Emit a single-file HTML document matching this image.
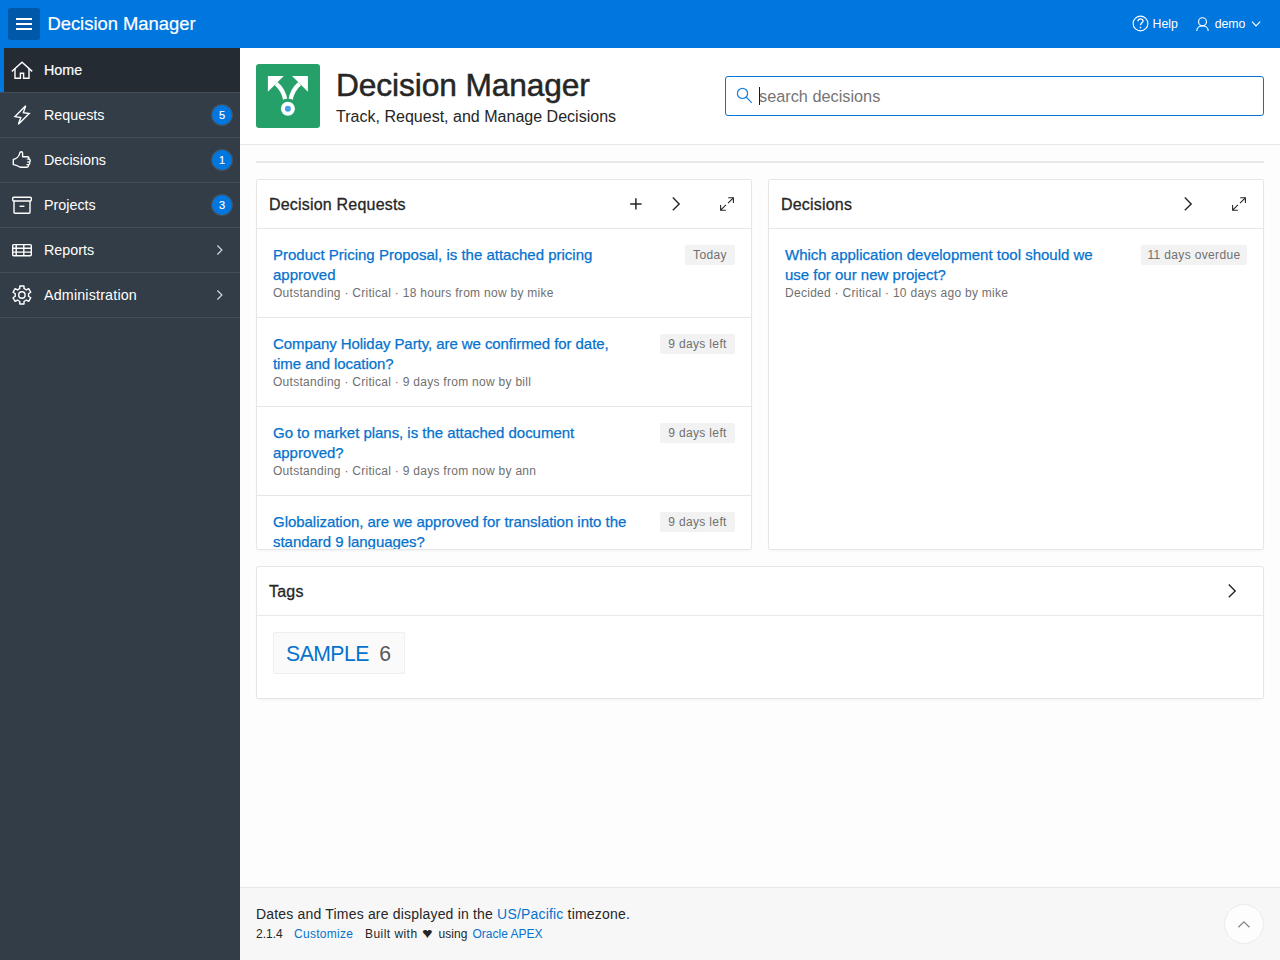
<!DOCTYPE html>
<html lang="en">
<head>
<meta charset="utf-8">
<title>Decision Manager</title>
<style>
*{box-sizing:border-box;margin:0;padding:0}
html,body{width:1280px;height:960px;overflow:hidden}
body{font-family:"Liberation Sans",sans-serif;background:#fdfdfd;color:#262626;position:relative;-webkit-font-smoothing:antialiased}
a{text-decoration:none;color:#0572ce}
.abs{position:absolute}
.t{position:absolute;white-space:nowrap;transform-origin:0 50%}
svg{display:block;overflow:visible}

/* header */
#hdr{position:absolute;left:0;top:0;width:1280px;height:48px;background:#0076df;color:#fff}
#burger{position:absolute;left:8px;top:8px;width:32px;height:32px;border-radius:3px;background:#0059a8}
#burger i{position:absolute;left:8px;width:16px;height:2px;background:#fff}

/* sidebar */
#side{position:absolute;left:0;top:48px;width:240px;height:912px;background:#333d47;color:#fff}
.nav{position:absolute;left:0;width:240px;height:45px;border-top:1px solid #444e58}
.nav .lbl{position:absolute;left:44px;top:0;height:44px;line-height:44px;font-size:14.3px;white-space:nowrap;transform-origin:0 50%}
.nav svg{position:absolute}
.nav .bdg{position:absolute;left:212px;top:12px;width:20px;height:20px;border-radius:50%;background:#0076df;box-shadow:0 0 0 1px rgba(255,255,255,.1);text-align:center;line-height:20px;font-size:11px;-webkit-text-stroke:.15px #fff;color:#fff}
.nav.cur{background:#242b33;border-top:0;height:44px}
.nav.cur:before{content:"";position:absolute;left:0;top:0;width:4px;height:44px;background:#0076df}

/* hero */
#hero{position:absolute;left:240px;top:48px;width:1040px;height:97px;background:#fff;border-bottom:1px solid #e8e8e8}
#logo{position:absolute;left:16px;top:16px;width:64px;height:64px;border-radius:3px;background:#26a069}
#search{position:absolute;left:485px;top:28px;width:539px;height:40px;border:1px solid #0572ce;border-radius:3px;background:#fff}

#rule{position:absolute;left:256px;top:161px;width:1008px;height:2px;background:#e7e7e7}

/* cards */
.card{position:absolute;background:#fff;border:1px solid #e6e6e6;border-radius:2px;box-shadow:0 2px 4px -2px rgba(0,0,0,.075);overflow:hidden}
.card .hd{position:absolute;left:0;top:0;right:0;height:49px;border-bottom:1px solid #e9e9e9}
.card .hd .ttl{position:absolute;left:12px;top:1px;line-height:48px;font-size:16px;letter-spacing:.2px;-webkit-text-stroke:.3px #262626;color:#262626;white-space:nowrap;transform-origin:0 50%}
.row{position:absolute;left:0;right:0;height:89px;border-top:1px solid #e6e6e6}
.row .a{position:absolute;left:16px;top:16px;font-size:15px;line-height:20px;color:#0572ce;-webkit-text-stroke:.25px #0572ce;white-space:nowrap;transform-origin:0 0}
.row .s{position:absolute;left:16px;top:56px;font-size:12px;letter-spacing:.28px;line-height:16px;color:#707070;white-space:nowrap;transform-origin:0 50%}
.row .b{position:absolute;right:16px;top:16px;height:20px;line-height:20px;text-align:center;border-radius:2px;background:#f2f2f2;color:#707070;font-size:12px;letter-spacing:.35px;white-space:nowrap}

/* footer */
#foot{position:absolute;left:240px;top:887px;width:1040px;height:73px;background:#f7f7f7;border-top:1px solid #e8e8e8}
#top{position:absolute;left:984px;top:16px;width:40px;height:40px;border-radius:50%;background:#fdfdfd;border:1px solid #ebebeb}
</style>
</head>
<body>

<!-- HEADER -->
<div id="hdr">
  <div id="burger"><i style="top:10px"></i><i style="top:15px"></i><i style="top:20px"></i></div>
  <div class="t" id="apptitle" style="left:47.400px;top:0;line-height:47px;font-size:18.400px;-webkit-text-stroke:.2px #fff">Decision Manager</div>
  <svg class="abs" style="left:1131.600px;top:15.300px" width="17" height="17" viewBox="0 0 17 17" fill="none" stroke="#fff"><circle cx="8.500" cy="8.500" r="7.400" stroke-width="1.100"/><path d="M6 6.200C6 4.700 7.100 3.900 8.500 3.900 10 3.900 11 4.800 11 6 11 7.900 8.500 7.900 8.500 10.300" stroke-width="1.300"/><circle cx="8.500" cy="12.500" r=".85" fill="#fff" stroke="none"/></svg>
  <div class="t" id="help" style="left:1152.500px;top:1px;line-height:47px;font-size:12.300px">Help</div>
  <svg class="abs" style="left:1195px;top:16px" width="16" height="16" viewBox="0 0 16 16" fill="none" stroke="#fff" stroke-width="1.150"><circle cx="7.500" cy="5.700" r="3.950"/><path d="M1.800 14.900C1.800 11.600 4.600 9.900 7.500 9.900S13.200 11.600 13.200 14.900"/></svg>
  <div class="t" id="demo" style="left:1214.700px;top:1px;line-height:47px;font-size:12.300px">demo</div>
  <svg class="abs" style="left:1251px;top:21px" width="10" height="6" viewBox="0 0 10 6"><path d="M1 .6 5 4.900 9.200.6" fill="none" stroke="#fff" stroke-width="1.150"/></svg>
</div>

<!-- SIDEBAR -->
<div id="side">
  <div class="nav cur" style="top:0"><svg width="44" height="44" style="left:0;top:0" fill="none" stroke="#fff" stroke-width="1.400"><path d="M12.300 22.900 22 14.200 31.700 22.900" stroke-linecap="square"/><path d="M15 20.600V30.200H20.400V25.300H23.600V30.200H29V20.600"/></svg><div class="lbl" style="-webkit-text-stroke:.2px #fff">Home</div></div>
  <div class="nav" style="top:44px"><svg width="44" height="44" style="left:0;top:0" fill="none" stroke="#fff" stroke-width="1.400"><path d="M25.700 12.700 15 23.600 20.800 24.500 18.400 31.300 29.200 20.500 23.400 19.600Z" stroke-linejoin="miter"/></svg><div class="lbl">Requests</div><div class="bdg">5</div></div>
  <div class="nav" style="top:89px"><svg width="44" height="44" style="left:0;top:0" fill="none" stroke="#fff" stroke-width="1.400" stroke-linejoin="round"><path d="M13.300 21.400C16.500 20.800 19.400 18 19.800 14.800 20 13.400 22.600 13.200 22.600 15V18.800H27.600C29 18.800 29.400 20.600 28.600 21 30.600 21.200 30.800 23.600 29.200 24 30.200 24.600 29.800 26.600 28.200 26.600 29 27.600 28.400 29.200 26.800 29.200H20.500C18.500 29.200 17.500 26.800 13.300 26.600Z"/><path d="M28.600 21H26.800M29.200 24H27M28.200 26.600H26.400" stroke-width="1.100"/></svg><div class="lbl">Decisions</div><div class="bdg">1</div></div>
  <div class="nav" style="top:134px"><svg width="44" height="44" style="left:0;top:0" fill="none" stroke="#fff" stroke-width="1.400"><rect x="12.700" y="14.300" width="18.600" height="3.700" rx="1"/><path d="M14 18V29.200a1 1 0 0 0 1 1H29a1 1 0 0 0 1-1V18"/><path d="M19.600 23.300H24.400"/></svg><div class="lbl">Projects</div><div class="bdg">3</div></div>
  <div class="nav" style="top:179px"><svg width="44" height="44" style="left:0;top:0" fill="none" stroke="#fff" stroke-width="1.400"><rect x="12.700" y="16.600" width="18.600" height="11.200" rx="1"/><path d="M16.200 16.600V27.800M23.800 16.600V27.800M12.700 20.300H31.300M12.700 24.100H31.300"/></svg><div class="lbl">Reports</div><svg width="8" height="12" style="left:216px;top:16px" viewBox="0 0 8 12" fill="none" stroke="#d4d7da" stroke-width="1.200"><path d="M1.400 1.500 5.900 6 1.400 10.500"/></svg></div>
  <div class="nav" style="top:224px"><svg width="44" height="44" style="left:0;top:0" fill="none" stroke="#fff" stroke-width="1.400" stroke-linejoin="round"><path d="M24.08 15.67L23.99 12.94L19.81 12.94L19.72 15.67A6.70 6.70 0 0 0 17.50 16.94L15.10 15.66L13.01 19.28L15.32 20.72A6.70 6.70 0 0 0 15.32 23.28L13.01 24.72L15.10 28.34L17.50 27.06A6.70 6.70 0 0 0 19.72 28.33L19.81 31.06L23.99 31.06L24.08 28.33A6.70 6.70 0 0 0 26.30 27.06L28.70 28.34L30.79 24.72L28.48 23.28A6.70 6.70 0 0 0 28.48 20.72L30.79 19.28L28.70 15.66L26.30 16.94A6.70 6.70 0 0 0 24.08 15.67Z"/><circle cx="21.900" cy="22" r="3.200"/></svg><div class="lbl" style="letter-spacing:.17px">Administration</div><svg width="8" height="12" style="left:216px;top:16px" viewBox="0 0 8 12" fill="none" stroke="#d4d7da" stroke-width="1.200"><path d="M1.400 1.500 5.900 6 1.400 10.500"/></svg></div>
  <div class="nav" style="top:269px;height:1px"></div>
</div>

<!-- HERO -->
<div id="hero">
  <div id="logo"><svg width="64" height="64" viewBox="0 0 64 64"><path d="M20.200 19.600Q27.600 26 29.300 36M43.600 19.600Q36.200 26 34.500 36" fill="none" stroke="#fff" stroke-width="4.300"/><circle cx="31.900" cy="44.800" r="10.200" fill="#26a069"/><path d="M11.900 11.900H27.800L11.900 27.800ZM51.900 11.900H36L51.900 27.800Z" fill="#fff"/><circle cx="31.900" cy="44.800" r="7" fill="#fff"/><circle cx="31.900" cy="44.800" r="3" fill="#479fea"/></svg></div>
  <div class="t" id="h1" style="left:96px;top:16px;line-height:42px;font-size:31.7px;letter-spacing:-.1px;-webkit-text-stroke:.5px #262626;color:#262626">Decision Manager</div>
  <div class="t" id="h2" style="left:96px;top:56.400px;line-height:24px;font-size:16.050px;color:#262626">Track, Request, and Manage Decisions</div>
  <div id="search">
    <svg class="abs" style="left:10px;top:10px" width="18" height="18" viewBox="0 0 18 18" fill="none" stroke="#1b7fe0" stroke-width="1.200"><circle cx="6.500" cy="6.400" r="5.100"/><path d="M10.200 10 15.800 15.800"/></svg>
    <div class="t" id="ph" style="left:33px;top:-.2px;line-height:38px;font-size:16.300px;color:#757575">search decisions</div>
    <div class="abs" style="left:33px;top:10px;width:1px;height:18px;background:#1a1a1a"></div>
  </div>
</div>
<div id="rule"></div>

<!-- DECISION REQUESTS -->
<div class="card" style="left:256px;top:179px;width:496px;height:371px">
  <div class="hd"><div class="ttl">Decision Requests</div><svg class="abs" style="left:360px;top:0" width="136" height="48" fill="none" stroke="#262626" stroke-width="1.400"><path d="M13.200 23.900H24.600M18.900 18.200V29.600" stroke-width="1.500"/><path d="M55.800 17.500 62.200 23.900 55.800 30.300"/><path d="M111.200 17.800H116.400V23M116.400 17.800 111 23.200M103.600 25V30.200H108.800M103.600 30.200 109 24.800" stroke-width="1.100"/></svg></div>
  <div class="row" style="top:48px"><div class="a">Product Pricing Proposal, is the attached pricing<br>approved</div><div class="s">Outstanding · Critical · 18 hours from now by mike</div><div class="b" style="width:50px">Today</div></div>
  <div class="row" style="top:137px"><div class="a" style="letter-spacing:-.07px">Company Holiday Party, are we confirmed for date,<br>time and location?</div><div class="s">Outstanding · Critical · 9 days from now by bill</div><div class="b" style="width:75px">9 days left</div></div>
  <div class="row" style="top:226px"><div class="a" style="letter-spacing:-.035px">Go to market plans, is the attached document<br>approved?</div><div class="s">Outstanding · Critical · 9 days from now by ann</div><div class="b" style="width:75px">9 days left</div></div>
  <div class="row" style="top:315px"><div class="a" style="letter-spacing:-.035px">Globalization, are we approved for translation into the<br>standard 9 languages?</div><div class="b" style="width:75px">9 days left</div></div>
</div>

<!-- DECISIONS -->
<div class="card" style="left:768px;top:179px;width:496px;height:371px">
  <div class="hd"><div class="ttl">Decisions</div><svg class="abs" style="left:360px;top:0" width="136" height="48" fill="none" stroke="#262626" stroke-width="1.400"><path d="M55.800 17.500 62.200 23.900 55.800 30.300"/><path d="M111.200 17.800H116.400V23M116.400 17.800 111 23.200M103.600 25V30.200H108.800M103.600 30.200 109 24.800" stroke-width="1.100"/></svg></div>
  <div class="row" style="top:48px;border-bottom:0"><div class="a">Which application development tool should we<br>use for our new project?</div><div class="s">Decided · Critical · 10 days ago by mike</div><div class="b" style="width:106px">11 days overdue</div></div>
</div>

<!-- TAGS -->
<div class="card" style="left:256px;top:566px;width:1008px;height:133px">
  <div class="hd"><div class="ttl">Tags</div><svg class="abs" style="left:960px;top:0" width="48" height="48" fill="none" stroke="#262626" stroke-width="1.400"><path d="M11.800 17.500 18.200 23.900 11.800 30.300"/></svg></div>
  <div class="abs" style="left:16px;top:65px;width:132px;height:42px;background:#fafafa;border:1px solid #efefef;border-radius:2px">
    <span class="t" id="tg1" style="left:12.100px;top:.5px;line-height:40px;font-size:21.200px;letter-spacing:-.55px;color:#0572ce">SAMPLE</span>
    <span class="t" id="tg2" style="left:105.300px;top:.5px;line-height:40px;font-size:21.200px;color:#595959">6</span>
  </div>
</div>

<!-- FOOTER -->
<div id="foot">
  <div class="t" id="f1" style="left:16px;top:16px;line-height:20px;font-size:14px;letter-spacing:.185px;color:#262626">Dates and Times are displayed in the <a>US/Pacific</a> timezone.</div>
  <div class="t" id="f2" style="left:16px;top:38px;line-height:16px;font-size:12px;color:#262626">2.1.4</div>
  <div class="t" id="f3" style="left:54px;top:38px;line-height:16px;font-size:12px;letter-spacing:.27px"><a>Customize</a></div>
  <div class="t" id="f4" style="left:125px;top:38px;line-height:16px;font-size:12px;letter-spacing:.45px;color:#262626">Built with</div>
  <div class="t" id="f5" style="left:181.900px;top:37.300px;line-height:16px;font-size:14.500px;transform:scaleX(1.24);color:#262626">♥</div>
  <div class="t" id="f6" style="left:198.400px;top:38px;line-height:16px;font-size:12px;letter-spacing:.1px;color:#262626">using</div>
  <div class="t" id="f7" style="left:232.500px;top:38px;line-height:16px;font-size:12px"><a>Oracle APEX</a></div>
  <div id="top"><svg class="abs" style="left:0;top:0" width="38" height="38" fill="none" stroke="#878787" stroke-width="1.300"><path d="M13.400 22.300 18.900 16.800 24.400 22.300"/></svg></div>
</div>

</body>
</html>
